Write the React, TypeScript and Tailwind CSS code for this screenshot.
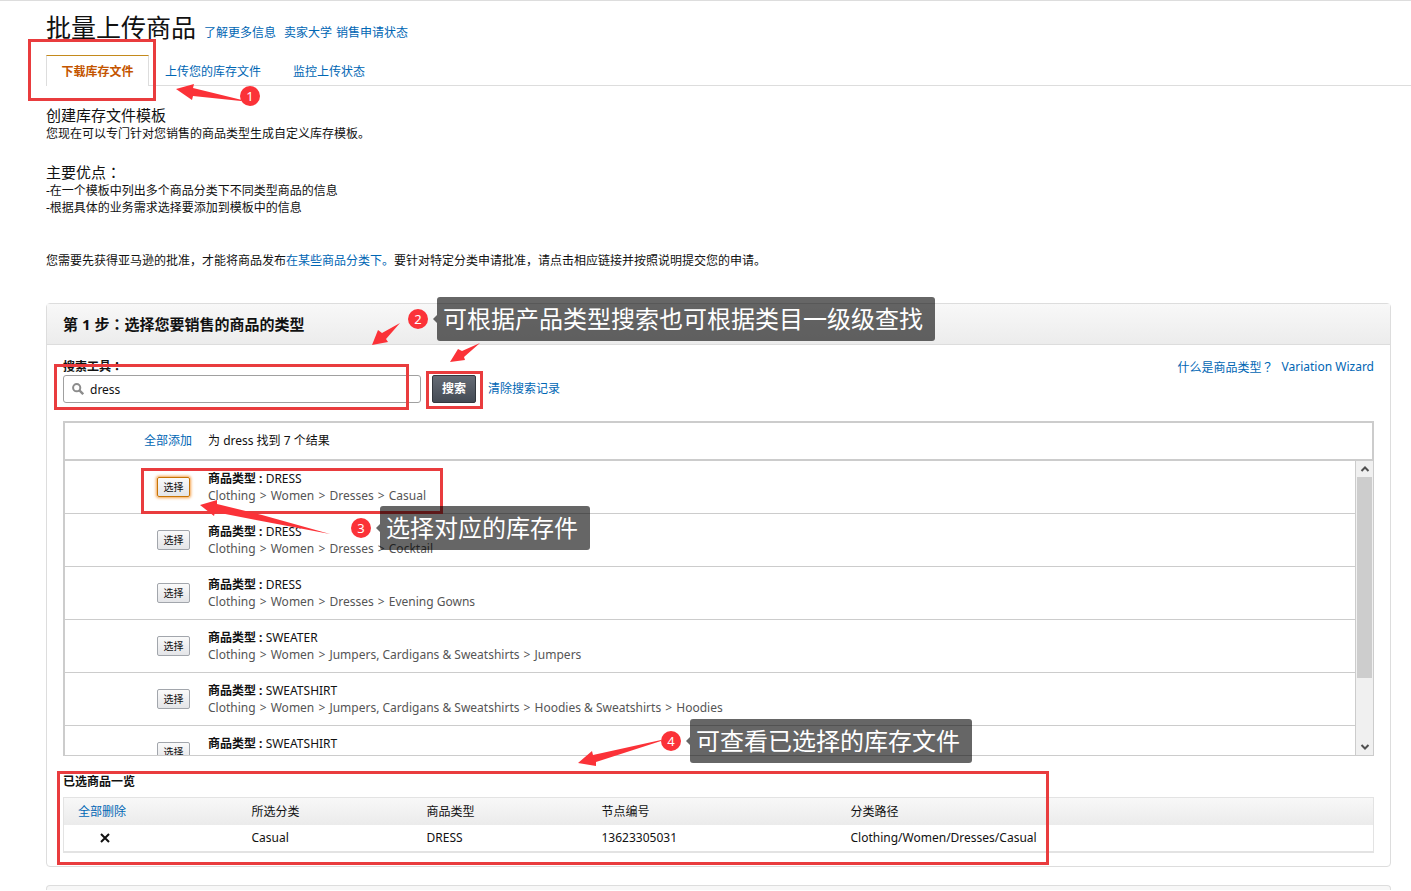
import React, { Fragment, useState } from 'react';
import clsx from 'clsx';

interface ProductResult {
  type: string;
  path: string[];
}

const RESULTS: ProductResult[] = [
  { type: 'DRESS', path: ['Clothing', 'Women', 'Dresses', 'Casual'] },
  { type: 'DRESS', path: ['Clothing', 'Women', 'Dresses', 'Cocktail'] },
  { type: 'DRESS', path: ['Clothing', 'Women', 'Dresses', 'Evening Gowns'] },
  { type: 'SWEATER', path: ['Clothing', 'Women', 'Jumpers, Cardigans & Sweatshirts', 'Jumpers'] },
  { type: 'SWEATSHIRT', path: ['Clothing', 'Women', 'Jumpers, Cardigans & Sweatshirts', 'Hoodies & Sweatshirts', 'Hoodies'] },
  { type: 'SWEATSHIRT', path: ['Clothing', 'Women', 'Sportswear', 'Hoodies & Sweatshirts', 'Hoodies'] },
];

const LINK = 'text-[#0066b4] hover:underline';

// Full-width punctuation centred in its box
function Mark({ children }: { children: string }) {
  return <span className="font-['Noto_Sans_CJK_TC',sans-serif]">{children}</span>;
}

function PageHeader() {
  return (
    <header>
      <div className="flex items-baseline pl-[46px] pt-1.5">
        <h1 className="text-[25px] leading-10">批量上传商品</h1>
        <nav className="ml-2 flex">
          <a href="#more" className={LINK}>了解更多信息</a>
          <a href="#university" className={clsx(LINK, 'ml-2')}>卖家大学</a>
          <a href="#status" className={clsx(LINK, 'ml-1')}>销售申请状态</a>
        </nav>
      </div>
      <nav className="ml-[46px] mt-2 flex h-[31px] border-b border-[#ddd]">
        <a
          href="#download"
          className="h-[31px] w-[103px] border-x border-t border-x-[#ddd] border-t-[#c48a1c] bg-white text-center font-bold leading-8 text-[#c45500]"
        >
          下载库存文件
        </a>
        <a href="#upload" className={clsx(LINK, 'ml-4 leading-[34px]')}>上传您的库存文件</a>
        <a href="#monitor" className={clsx(LINK, 'ml-8 leading-[34px]')}>监控上传状态</a>
      </nav>
    </header>
  );
}

function Intro() {
  return (
    <section className="pl-[46px] pt-[19px] leading-[17px]">
      <h2 className="text-[15px] leading-5">创建库存文件模板</h2>
      <p>您现在可以专门针对您销售的商品类型生成自定义库存模板。</p>
      <h2 className="mt-5 text-[15px] leading-5">主要优点<Mark>：</Mark></h2>
      <p>-在一个模板中列出多个商品分类下不同类型商品的信息</p>
      <p>-根据具体的业务需求选择要添加到模板中的信息</p>
      <p className="mt-9">
        您需要先获得亚马逊的批准，才能将商品发布
        <a href="#categories" className={LINK}>在某些商品分类下。</a>
        要针对特定分类申请批准，请点击相应链接并按照说明提交您的申请。
      </p>
    </section>
  );
}

function SearchForm() {
  const [query, setQuery] = useState('dress');

  return (
    <div className="flex items-start justify-between pt-[13px]">
      <form onSubmit={(e) => e.preventDefault()}>
        <label htmlFor="search" className="block font-bold leading-4">搜索工具<Mark>：</Mark></label>
        <div className="flex items-center">
          <div className="flex h-7 w-[358px] items-center rounded-[3px] border border-[#a0a0a0] bg-white pl-2">
            <svg viewBox="0 0 12 12" className="h-3 w-3" fill="none" stroke="#8c8c8c" strokeWidth="2">
              <circle cx="4.7" cy="4.7" r="3.6" />
              <path d="M7.4 7.4L11.2 11.2" strokeWidth="2.4" />
            </svg>
            <input
              id="search"
              type="text"
              value={query}
              onChange={(e) => setQuery(e.target.value)}
              className="ml-1.5 h-6 flex-1 text-[12px] outline-none"
            />
          </div>
          <button
            type="submit"
            className="ml-[11px] h-7 w-11 rounded-[2px] border border-[#32373e] bg-linear-to-b from-[#656b75] to-[#444b55] font-bold text-white"
          >
            搜索
          </button>
          <a href="#clear" className={clsx(LINK, 'ml-3')}>清除搜索记录</a>
        </div>
      </form>
      <nav className="flex gap-2 leading-[18px]">
        <a href="#types" className={LINK}>什么是商品类型<Mark>？</Mark></a>
        <a href="#wizard" className={LINK}>Variation Wizard</a>
      </nav>
    </div>
  );
}

function ResultRow({ result, focused }: { result: ProductResult; focused: boolean }) {
  return (
    <li className="flex h-[53px] border-b border-[#ccc] pl-[92px]">
      <button
        type="button"
        className={clsx(
          'mt-4 h-5 w-[33px] shrink-0 rounded-[2px] border bg-linear-to-b from-[#fafafa] to-[#e4e5e8] text-[10px] leading-none',
          focused ? 'border-[#c77405] shadow-[0_0_3px_1px_#f5a14a]' : 'border-[#a2a6ac]',
        )}
      >
        选择
      </button>
      <div className="ml-[18px] mt-[9px] whitespace-nowrap leading-[17px]">
        <p><b>商品类型 :</b> {result.type}</p>
        <p className="text-[#555]">
          {result.path.map((part, i) => (
            <Fragment key={i}>
              {i > 0 && <span className="mx-px"> &gt; </span>}
              {part}
            </Fragment>
          ))}
        </p>
      </div>
    </li>
  );
}

function Scrollbar() {
  return (
    <div className="flex w-[18px] shrink-0 flex-col items-center border-l border-[#ccc] bg-[#f0f0f0]">
      <svg viewBox="0 0 16 16" className="h-4 w-4" fill="none" stroke="#505050" strokeWidth="2">
        <path d="M4.5 10L8 6.5L11.5 10" />
      </svg>
      <div className="h-[201px] w-[15px] bg-[#cdcdcd]" />
      <svg viewBox="0 0 16 16" className="mt-auto h-4 w-4" fill="none" stroke="#505050" strokeWidth="2">
        <path d="M4.5 6L8 9.5L11.5 6" />
      </svg>
    </div>
  );
}

function Results() {
  return (
    <div className="mt-[18px]">
      <div className="flex h-10 items-center border-2 border-[#ccc] pl-[79px]">
        <a href="#add-all" className={LINK}>全部添加</a>
        <span className="ml-4">为 dress 找到 7 个结果</span>
      </div>
      <div className="flex h-[295px] border-b border-l-2 border-r border-[#ccc]">
        <ul className="flex-1 overflow-hidden">
          {RESULTS.map((r, i) => (
            <ResultRow key={i} result={r} focused={i === 0} />
          ))}
        </ul>
        <Scrollbar />
      </div>
    </div>
  );
}

function SelectedProducts() {
  return (
    <section className="mt-4">
      <h3 className="font-bold leading-5">已选商品一览</h3>
      <table className="mt-[5px] w-full table-fixed border border-b-2 border-[#e3e3e3] text-left">
        <colgroup>
          <col className="w-[174px]" />
          <col className="w-[175px]" />
          <col className="w-[175px]" />
          <col className="w-[249px]" />
          <col />
        </colgroup>
        <thead>
          <tr className="h-[27px] bg-linear-to-b from-[#f8f8f8] to-[#ebebeb]">
            <th className="pl-3.5 pt-0.5 font-normal"><a href="#remove-all" className={LINK}>全部删除</a></th>
            <th className="pl-3.5 pt-0.5 font-normal">所选分类</th>
            <th className="pl-3.5 pt-0.5 font-normal">商品类型</th>
            <th className="pl-3.5 pt-0.5 font-normal">节点编号</th>
            <th className="pl-3.5 pt-0.5 font-normal">分类路径</th>
          </tr>
        </thead>
        <tbody>
          <tr className="h-[27px]">
            <td className="pl-9">
              <button type="button" aria-label="删除" className="block">
                <svg viewBox="0 0 10 10" className="h-2.5 w-2.5" stroke="#111" strokeWidth="2">
                  <path d="M1 1L9 9M9 1L1 9" />
                </svg>
              </button>
            </td>
            <td className="pl-3.5">Casual</td>
            <td className="pl-3.5">DRESS</td>
            <td className="pl-3.5">13623305031</td>
            <td className="pl-3.5">Clothing/Women/Dresses/Casual</td>
          </tr>
        </tbody>
      </table>
    </section>
  );
}

function Frame({ className }: { className: string }) {
  return <div className={clsx('absolute border-3 border-[#e93c3e]', className)} />;
}

function Marker({ n, className }: { n: number; className: string }) {
  return (
    <span className={clsx('absolute flex h-5 w-5 items-center justify-center rounded-full bg-[#fb3238] text-[13px] leading-none text-white', className)}>
      {n}
    </span>
  );
}

function Callout({ text, className }: { text: string; className: string }) {
  return (
    <div className={clsx('absolute flex h-11 items-center whitespace-nowrap rounded-[3px] bg-black/60 pl-1.5 pr-3 text-[24px] text-white', className)}>
      <span className="absolute -left-1 top-[18px] border-y-4 border-r-4 border-y-transparent border-r-black/60" />
      {text}
    </div>
  );
}

function Arrow({ className, viewBox, d }: { className: string; viewBox: string; d: string }) {
  return (
    <svg viewBox={viewBox} className={clsx('absolute', className)} fill="#fb3238">
      <path d={d} />
    </svg>
  );
}

// Numbered walkthrough drawn over the page
function Annotations() {
  return (
    <div className="pointer-events-none absolute inset-x-0 -top-px">
      <Frame className="left-7 top-[39px] h-[62px] w-32" />
      <Arrow className="left-[176px] top-[84px] h-[18px] w-[66px]" viewBox="0 0 66 18" d="M0 5L18 0L17 4L66 16L65 17L17 12L16 16Z" />
      <Marker n={1} className="left-[240px] top-[86px]" />

      <Frame className="left-[54px] top-[364px] h-[46px] w-[355px]" />
      <Frame className="left-[426px] top-[371px] h-[38px] w-[57px]" />
      <Arrow className="left-[372px] top-[323px] h-[22px] w-7" viewBox="0 0 28 22" d="M0 22L6 7L10 10L28 0L14 16L16 19Z" />
      <Arrow className="left-[450px] top-[343px] h-[19px] w-[30px]" viewBox="0 0 30 19" d="M0 19L8 6L12 8L30 0L14 14L15 17Z" />
      <Marker n={2} className="left-[408px] top-[309px]" />
      <Callout text="可根据产品类型搜索也可根据类目一级级查找" className="left-[437px] top-[297px]" />

      <Frame className="left-[141px] top-[468px] h-[46px] w-[302px]" />
      <Arrow className="left-[200px] top-[500px] h-[35px] w-[130px]" viewBox="0 0 130 35" d="M0 5L17 0L17 4L62 15L130 34L56 20L15 12L14 16Z" />
      <Marker n={3} className="left-[351px] top-[518px]" />
      <Callout text="选择对应的库存件" className="left-[380px] top-[506px]" />

      <Arrow className="left-[578px] top-[739px] h-[28px] w-[84px]" viewBox="0 0 84 28" d="M0 24L14 12L15 16L83 1L83 2L18 23L18 27Z" />
      <Marker n={4} className="left-[661px] top-[731px]" />
      <Callout text="可查看已选择的库存文件" className="left-[690px] top-[719px]" />
      <Frame className="left-[57px] top-[771px] h-[94px] w-[992px]" />
    </div>
  );
}

export default function App() {
  return (
    <div className="relative border-t border-[#ddd] bg-white font-['Noto_Sans','Noto_Sans_CJK_SC',sans-serif] text-[12px] text-[#111]">
      <PageHeader />
      <Intro />
      <main className="ml-[46px] mr-5 mt-[34px]">
        <section className="rounded border border-[#ddd]">
          <h2 className="flex h-[41px] items-center border-b border-[#ddd] bg-linear-to-b from-[#f8f8f8] to-[#ececec] pl-4 text-[15px] font-bold">
            <span>第 1 步<Mark>：</Mark>选择您要销售的商品的类型</span>
          </h2>
          <div className="px-4 pb-[13px]">
            <SearchForm />
            <Results />
            <SelectedProducts />
          </div>
        </section>
        <section className="mt-[18px] h-[5px] rounded-t border border-b-0 border-[#ddd] bg-[#f7f7f7]" />
      </main>
      <Annotations />
    </div>
  );
}
